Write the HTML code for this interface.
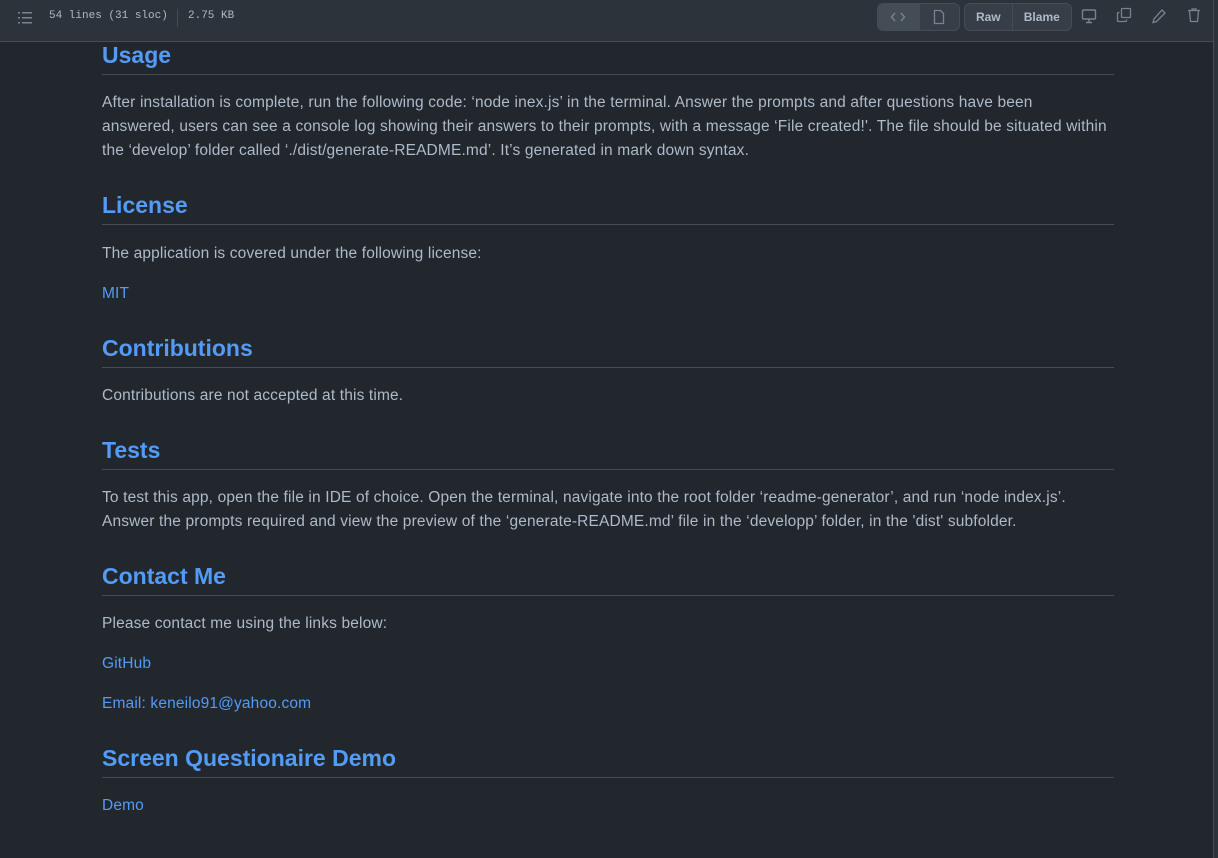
<!DOCTYPE html>
<html><head><meta charset="utf-8"><style>
body{margin:0;width:1218px;height:858px;background:#22272e;font-family:"Liberation Sans",sans-serif;color:#adbac7;overflow:hidden;position:relative}
.hdr{position:absolute;left:0;top:0;width:1214px;height:41px;background:#2d333b;border-bottom:1px solid #444c56}
.rb{position:absolute;right:0;top:0;width:4px;height:858px;background:#2d333b;border-left:1px solid #444c56}
.mono{font-family:"Liberation Mono",monospace;font-size:11px;color:#adbac7;position:absolute;top:10px}
.grp{position:absolute;top:3px;height:26px;border:1px solid #444c56;border-radius:6px;background:#373e47;display:flex;overflow:hidden}
.grp div{border-right:1px solid #444c56;display:flex;align-items:center;justify-content:center;font-size:12px;font-weight:bold;color:#adbac7}
.grp div:last-child{border-right:0}
h2{position:absolute;left:102px;width:1012px;margin:0;font-size:23px;font-weight:bold;color:#539bf5;height:34px;border-bottom:1px solid #444c56;line-height:30px}
p{position:absolute;left:102px;width:1040px;margin:0;font-size:15.5px;line-height:24px;white-space:nowrap;letter-spacing:0.15px}
a{color:#539bf5;text-decoration:none}
svg{position:absolute}
</style></head><body>
<div class="hdr">
<svg style="left:17px;top:10px" width="16" height="16" viewBox="0 0 16 16" fill="#768390"><rect x="1" y="2" width="2" height="1.5"/><rect x="5" y="2" width="10" height="1.5"/><rect x="1" y="7" width="2" height="1.5"/><rect x="5" y="7" width="10" height="1.5"/><rect x="1" y="12" width="2" height="1.5"/><rect x="5" y="12" width="10" height="1.5"/></svg>
<span class="mono" style="left:49px">54 lines (31 sloc)</span>
<div style="position:absolute;left:177px;top:9px;width:1px;height:18px;background:#444c56"></div>
<span class="mono" style="left:188px">2.75 KB</span>
<div class="grp" style="left:877px;width:81px"><div style="width:41px;background:#444c56"><svg style="position:static" width="16" height="16" viewBox="0 0 16 16" fill="none" stroke="#768390" stroke-width="1.4"><path d="M5 4L1.5 8 5 12M11 4l3.5 4-3.5 4"/></svg></div><div style="width:40px"><svg style="position:static" width="16" height="16" viewBox="0 0 16 16" fill="none" stroke="#768390" stroke-width="1.3"><path d="M3.5 1.5h6l3 3v10h-9z"/></svg></div></div>
<div class="grp" style="left:964px;width:106px"><div style="width:47px">Raw</div><div style="width:59px">Blame</div></div>
<svg style="left:1081px;top:8px" width="16" height="16" viewBox="0 0 16 16" fill="none" stroke="#768390" stroke-width="1.4"><rect x="1.5" y="2" width="13" height="9" rx="1"/><path d="M8 11v3M5 14.5h6"/></svg>
<svg style="left:1116px;top:7px" width="16" height="16" viewBox="0 0 16 16" fill="none" stroke="#768390" stroke-width="1.3"><rect x="5.5" y="1.5" width="9" height="9" rx="1"/><path d="M3.5 5.5h-1a1 1 0 0 0-1 1v7a1 1 0 0 0 1 1h7a1 1 0 0 0 1-1v-1"/></svg>
<svg style="left:1151px;top:8px" width="16" height="16" viewBox="0 0 16 16" fill="none" stroke="#768390" stroke-width="1.3"><path d="M11 2l3 3-8.5 8.5-3.5 1 1-3.5z"/></svg>
<svg style="left:1186px;top:7px" width="16" height="16" viewBox="0 0 16 16" fill="none" stroke="#768390" stroke-width="1.3"><path d="M2 3.5h12M6 3.5V2h4v1.5M3.5 3.5l1 11h7l1-11"/></svg>
</div>
<div class="rb"></div>

<h2 style="top:40px">Usage</h2>
<p style="top:91px">After installation is complete, run the following code: ‘node inex.js’ in the terminal. Answer the prompts and after questions have been<br>answered, users can see a console log showing their answers to their prompts, with a message ‘File created!'. The file should be situated within<br>the ‘develop’ folder called ‘./dist/generate-README.md’. It’s generated in mark down syntax.</p>
<h2 style="top:190px">License</h2>
<p style="top:242px">The application is covered under the following license:</p>
<p style="top:282px"><a>MIT</a></p>
<h2 style="top:333px">Contributions</h2>
<p style="top:384px">Contributions are not accepted at this time.</p>
<h2 style="top:435px">Tests</h2>
<p style="top:486px">To test this app, open the file in IDE of choice. Open the terminal, navigate into the root folder ‘readme-generator’, and run ‘node index.js’.<br>Answer the prompts required and view the preview of the ‘generate-README.md’ file in the ‘developp’ folder, in the 'dist' subfolder.</p>
<h2 style="top:561px">Contact Me</h2>
<p style="top:612px">Please contact me using the links below:</p>
<p style="top:652px"><a>GitHub</a></p>
<p style="top:692px"><a>Email: keneilo91@yahoo.com</a></p>
<h2 style="top:743px">Screen Questionaire Demo</h2>
<p style="top:794px"><a>Demo</a></p>
</body></html>
